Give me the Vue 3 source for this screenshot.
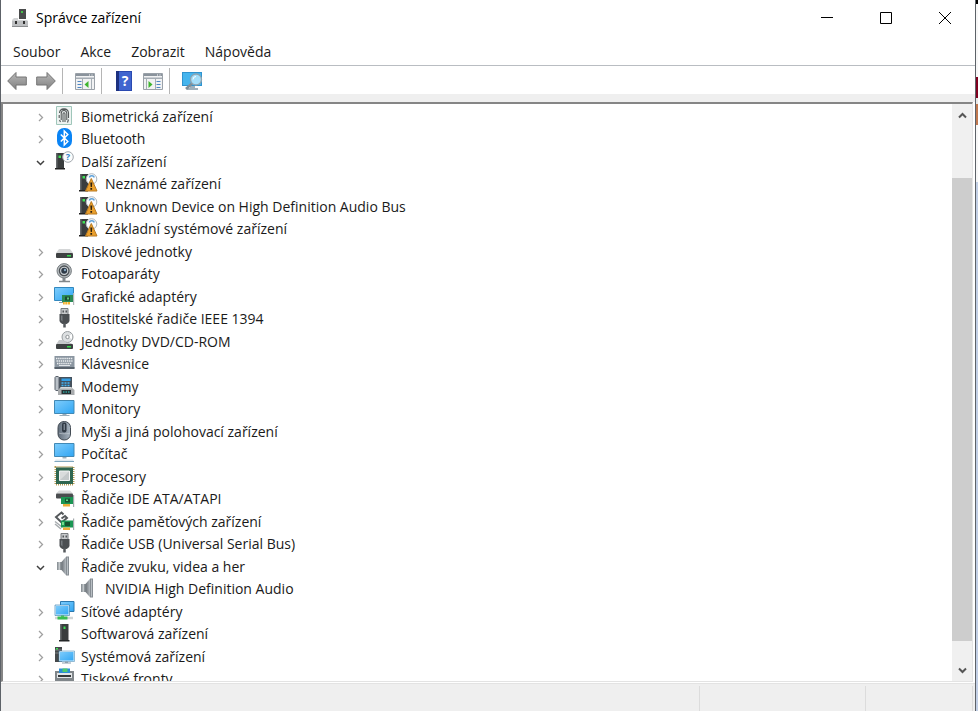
<script setup>
import { ref, computed } from "vue";

const menus = ["Soubor", "Akce", "Zobrazit", "Nápověda"];

const tree = ref([
  { label: "Biometrická zařízení", icon: "biometric" },
  { label: "Bluetooth", icon: "bluetooth" },
  {
    label: "Další zařízení",
    icon: "other",
    open: true,
    children: [
      { label: "Neznámé zařízení", icon: "unknown" },
      { label: "Unknown Device on High Definition Audio Bus", icon: "unknown" },
      { label: "Základní systémové zařízení", icon: "unknown" },
    ],
  },
  { label: "Diskové jednotky", icon: "disk" },
  { label: "Fotoaparáty", icon: "camera" },
  { label: "Grafické adaptéry", icon: "graphics" },
  { label: "Hostitelské řadiče IEEE 1394", icon: "plug" },
  { label: "Jednotky DVD/CD-ROM", icon: "dvd" },
  { label: "Klávesnice", icon: "keyboard" },
  { label: "Modemy", icon: "modem" },
  { label: "Monitory", icon: "monitor" },
  { label: "Myši a jiná polohovací zařízení", icon: "mouse" },
  { label: "Počítač", icon: "computer" },
  { label: "Procesory", icon: "cpu" },
  { label: "Řadiče IDE ATA/ATAPI", icon: "ide" },
  { label: "Řadiče paměťových zařízení", icon: "storage" },
  { label: "Řadiče USB (Universal Serial Bus)", icon: "plug" },
  {
    label: "Řadiče zvuku, videa a her",
    icon: "speaker",
    open: true,
    children: [{ label: "NVIDIA High Definition Audio", icon: "speaker" }],
  },
  { label: "Síťové adaptéry", icon: "network" },
  { label: "Softwarová zařízení", icon: "software" },
  { label: "Systémová zařízení", icon: "system" },
  { label: "Tiskové fronty", icon: "printer" },
]);

// flat list of what is visible right now
const rows = computed(() =>
  tree.value.flatMap((node) => [
    { node, child: false },
    ...(node.open && node.children ? node.children.map((c) => ({ node: c, child: true })) : []),
  ])
);

function toggle(node) {
  node.open = !node.open;
}
</script>

<template>
  <div class="desktop">
    <main class="window">
      <header class="titlebar">
        <svg class="titlebar__icon" viewBox="0 0 18 20">
          <rect x="8" y="1" width="7" height="10" fill="#4a4c4c" />
          <rect x="10" y="3" width="2" height="2" fill="#46c24a" />
          <path d="M3 10h4v2h9l1 1v6H1v-7z" fill="#d2d4d5" />
          <path d="M1 13h16v6H1z" fill="#bdbfc1" />
          <path d="M1 18h16v1H1z" fill="#8b8d8f" />
          <path d="M4 13h2v3H4zM12 13h2v3h-2z" fill="#303030" />
        </svg>
        <h1 class="titlebar__text">Správce zařízení</h1>
        <div class="titlebar__controls">
          <button class="control" aria-label="Minimalizovat">
            <svg viewBox="0 0 12 12"><path d="M0 5.500h12" /></svg>
          </button>
          <button class="control" aria-label="Maximalizovat">
            <svg viewBox="0 0 12 12"><path d="M.5 .5h11v11H.5z" /></svg>
          </button>
          <button class="control" aria-label="Zavřít">
            <svg viewBox="0 0 12 12"><path d="M0 0l12 12M12 0L0 12" /></svg>
          </button>
        </div>
      </header>

      <nav class="menu">
        <button v-for="m in menus" :key="m" class="menu__item">{{ m }}</button>
      </nav>

      <div class="toolbar">
        <div class="toolbar__group">
          <button class="tool" aria-label="Zpět">
            <svg viewBox="0 0 20 20">
              <path d="M.7 10L9 1.500V6h10.300v8H9v4.500z" fill="url(#gArrow)" stroke="#757575" />
            </svg>
          </button>
          <button class="tool" aria-label="Vpřed">
            <svg viewBox="0 0 20 20">
              <path d="M19.300 10L11 1.500V6H.7v8H11v4.500z" fill="url(#gArrow)" stroke="#757575" />
            </svg>
          </button>
        </div>
        <div class="toolbar__group">
          <button class="tool" aria-label="Zobrazit strom konzoly">
            <svg viewBox="0 0 20 20">
              <path d="M.5 2.500h19v16H.5z" fill="#f1f2f3" stroke="#9aa1a8" />
              <path d="M1 3h18v2H1z" fill="#8a939c" />
              <path d="M14 3.500h1v1h-1zM16.500 3.500h1v1h-1z" fill="#fff" />
              <path d="M1 6.500h18v1.500H1z" fill="#a5adb4" />
              <path d="M2.500 10.500h4M2.500 13.500h4M2.500 16.500h4" stroke="#4d86c4" />
              <path d="M7.500 8v10M16.500 8v10" stroke="#a5adb4" />
              <path d="M13.500 10v7L9.500 13.500z" fill="#3fb52f" />
            </svg>
          </button>
        </div>
        <div class="toolbar__group">
          <button class="tool" aria-label="Nápověda">
            <svg viewBox="0 0 20 20">
              <path d="M2 0h16v20H2z" fill="#2a49b0" />
              <path d="M5 1h12v18H5z" fill="#4065cf" />
              <path d="M2 0h3v20H2z" fill="#1d3180" />
              <text x="11" y="15" text-anchor="middle" font-size="14" font-weight="bold" fill="#fff">?</text>
            </svg>
          </button>
          <button class="tool" aria-label="Podokno akcí">
            <svg viewBox="0 0 20 20">
              <path d="M.5 2.500h19v16H.5z" fill="#f1f2f3" stroke="#9aa1a8" />
              <path d="M1 3h18v2H1z" fill="#8a939c" />
              <path d="M14 3.500h1v1h-1zM16.500 3.500h1v1h-1z" fill="#fff" />
              <path d="M1 6.500h18v1.500H1z" fill="#a5adb4" />
              <path d="M13.500 10.500h4M13.500 13.500h4M13.500 16.500h4" stroke="#4d86c4" />
              <path d="M3.500 8v10M12.500 8v10" stroke="#a5adb4" />
              <path d="M5.500 10v7l4-3.500z" fill="#3fb52f" />
            </svg>
          </button>
        </div>
        <div class="toolbar__group">
          <button class="tool" aria-label="Vyhledat změny hardwaru">
            <svg viewBox="0 0 20 20">
              <path d="M0 1h20v14H0z" fill="#2f93cf" />
              <path d="M1 2h18v12H1z" fill="#45b5ee" />
              <path d="M8 15h5v2h3v2H5v-2h3z" fill="#9fb0bb" />
              <path d="M10.500 12l-6.500 6" stroke="#7e8e99" stroke-width="2.500" />
              <circle cx="14" cy="8.500" r="5.500" fill="#a4def9" stroke="#8fa3af" stroke-width="1.300" />
              <path d="M11 8.500a3 3 0 0 1 3-3" fill="none" stroke="#fff" />
            </svg>
          </button>
        </div>
      </div>

      <section class="pane">
        <ul class="tree">
          <li v-for="row in rows" :key="row.node.label" :class="['row', { 'row--child': row.child }]">
            <button
              v-if="!row.child"
              :class="['row__toggle', { open: row.node.open }]"
              :aria-label="row.node.label"
              @click="toggle(row.node)"
            >
              <svg v-if="row.node.open" viewBox="0 0 9 9"><path d="M1 3l3.500 3.500L8 3" /></svg>
              <svg v-else viewBox="0 0 9 9"><path d="M3 1l3.500 3.500L3 8" /></svg>
            </button>
            <svg class="row__icon" viewBox="0 0 21 20"><use :href="'#' + row.node.icon" /></svg>
            <span class="row__label">{{ row.node.label }}</span>
          </li>
        </ul>
        <div class="scrollbar">
          <button class="scrollbar__arrow" aria-label="Nahoru">
            <svg viewBox="0 0 9 9"><path d="M1 6.500L4.500 3 8 6.500" /></svg>
          </button>
          <div class="scrollbar__track"><div class="scrollbar__thumb"></div></div>
          <button class="scrollbar__arrow" aria-label="Dolů">
            <svg viewBox="0 0 9 9"><path d="M1 2.500L4.500 6 8 2.500" /></svg>
          </button>
        </div>
      </section>

      <footer class="status">
        <div class="status__cell status__cell--main"></div>
        <div class="status__cell"></div>
        <div class="status__cell status__cell--last"></div>
      </footer>
    </main>
    <div class="behind"></div>

    <!-- Icon sprite -->
    <svg class="sprite" aria-hidden="true">
      <defs>
        <linearGradient id="gArrow" x2="0" y2="1">
          <stop offset="0" stop-color="#b9b9b9" />
          <stop offset="1" stop-color="#808080" />
        </linearGradient>
        <linearGradient id="gScreen" x2="1" y2="1">
          <stop offset="0" stop-color="#7fcdfc" />
          <stop offset="1" stop-color="#2fa5f3" />
        </linearGradient>
        <linearGradient id="gCone">
          <stop offset="0" stop-color="#6a7076" />
          <stop offset="1" stop-color="#b4babf" />
        </linearGradient>
        <linearGradient id="gMouse">
          <stop offset="0" stop-color="#5f6b78" />
          <stop offset="1" stop-color="#a9b5c1" />
        </linearGradient>
      </defs>

      <symbol id="biometric" viewBox="0 0 21 20">
        <path d="M2.500 .5h15v18h-15z" fill="#edf3f1" stroke="#9fc6ba" />
        <g fill="none" stroke="#55595a" stroke-width="1.100">
          <path d="M5.500 7C6 1.500 14 1.500 14.500 7v5" />
          <path d="M5.200 9v3M7.200 14V7.500c0-4 5.600-4 5.600 0V14" />
          <path d="M9 16V8c0-1.700 2-1.700 2 0v8M5.500 14l1 2M14.500 13.500l-1 3" />
          <path d="M7 3.500h6" />
        </g>
      </symbol>

      <symbol id="bluetooth" viewBox="0 0 21 20">
        <rect x="3" y="0" width="15" height="20" rx="7" fill="#0a84f5" />
        <path d="M6.800 6.500l7 7-3.500 3.500V3l3.500 3.500-7 7" fill="none" stroke="#fff" stroke-width="1.500" />
      </symbol>

      <symbol id="other" viewBox="0 0 21 20">
        <path d="M2 2h8v15H2z" fill="#3a3d3e" />
        <path d="M2 2h1.500v15H2z" fill="#65696b" />
        <path d="M1 17h10v1.500H1z" fill="#222" />
        <path d="M4.500 4.500h2.500v2.500H4.500z" fill="#3ee055" />
        <circle cx="14" cy="6" r="5.300" fill="#fbfcfd" stroke="#a3a9ae" />
        <text x="14" y="9" text-anchor="middle" font-size="9" font-weight="bold" fill="#2e81c9">?</text>
      </symbol>

      <symbol id="unknown" viewBox="0 0 21 20">
        <path d="M2 1h8v16H2z" fill="#3a3d3e" />
        <path d="M2 1h1.500v16H2z" fill="#65696b" />
        <path d="M1 17h9v1.500H1z" fill="#222" />
        <path d="M4.500 3h2.500v2.500H4.500z" fill="#3ee055" />
        <circle cx="13.500" cy="6" r="5.300" fill="#fbfcfd" stroke="#aeb6bd" />
        <path d="M11.500 4.500c0-2.500 4.500-2.500 4.500 0" fill="none" stroke="#5a9fd8" stroke-width="1.500" />
        <path d="M13.300 5.500L19 18H7.500z" fill="#eba02c" stroke="#b87a22" stroke-linejoin="round" />
        <path d="M12.300 9.500h2l-.4 4.500h-1.200zM12.400 15h1.700v1.700h-1.700z" fill="#2b2110" />
      </symbol>

      <symbol id="disk" viewBox="0 0 21 20">
        <path d="M5 8h11l3 4H2z" fill="#d4d6d7" />
        <rect x="2" y="12" width="17" height="5" rx="1" fill="#3e4142" />
        <path d="M13 14h4v1.500h-4z" fill="#35d84b" />
      </symbol>

      <symbol id="camera" viewBox="0 0 21 20">
        <path d="M10 13v5" stroke="#858a8e" stroke-width="3" />
        <path d="M5 18.500h11" stroke="#82878a" stroke-width="1.500" />
        <circle cx="10.200" cy="7.800" r="7.200" fill="#b5babd" stroke="#777d81" />
        <circle cx="10.200" cy="7.800" r="4.800" fill="#cfd3d6" stroke="#4b5054" stroke-width="1.300" />
        <circle cx="10.200" cy="7.800" r="3" fill="#2e3a47" />
        <circle cx="11" cy="7" r="1.200" fill="#85a4bd" />
      </symbol>

      <symbol id="graphics" viewBox="0 0 21 20">
        <path d="M.5 1.500h19v13H.5z" fill="url(#gScreen)" stroke="#3288bf" />
        <path d="M5 16h6v1H5z" fill="#8aa0ad" />
        <path d="M8 9h11v7H8z" fill="#2a8a55" />
        <path d="M11 10.500h5v4h-5z" fill="#1c4a33" />
        <path d="M13 11.500h2v2h-2z" fill="#5dc87b" />
        <path d="M19 7h1.200v12H19z" fill="#b3b7b9" />
        <path d="M9 16h7v2.500H9z" fill="#f4b12d" />
        <path d="M11 16v3M13.500 16v3" stroke="#fff" stroke-width=".5" />
      </symbol>

      <symbol id="plug" viewBox="0 0 21 20">
        <path d="M7 .5h7v6H7z" fill="#c6c9cb" stroke="#777b7e" />
        <path d="M8.500 2.500h1.500v2H8.500zM11.500 2.500H13v2h-1.500z" fill="#53575a" />
        <path d="M5.500 6h10v6.500c0 2-2 3-3 3.500h-4c-1-.5-3-1.500-3-3.500z" fill="#4b4f52" />
        <path d="M7 7.500h1.500v6L7 12z" fill="#777c80" />
        <path d="M10.500 15v4.500" stroke="#55595c" stroke-width="2.500" />
      </symbol>

      <symbol id="dvd" viewBox="0 0 21 20">
        <circle cx="13.500" cy="6" r="5.500" fill="#dcdfe1" stroke="#989da0" />
        <path d="M13.500 6l4.500-3v5z" fill="#fff" />
        <circle cx="13.500" cy="6" r="1.700" fill="#fff" stroke="#8c9194" />
        <path d="M5 9h4l4 3h4l2 1.500H2z" fill="#c6c9cb" />
        <rect x="2" y="13" width="17" height="5" rx="1" fill="#3e4142" />
        <path d="M13 15h4v1.500h-4z" fill="#35d84b" />
      </symbol>

      <symbol id="keyboard" viewBox="0 0 21 20">
        <path d="M.5 3h20v12.500H.5z" fill="#8b96a1" />
        <path d="M.5 14h20v2H.5z" fill="#59636d" />
        <path d="M2 5.500h17M2.500 8h16M3 10.500h15" stroke="#eceff1" stroke-width="1.400" stroke-dasharray="1.400 .7" />
        <path d="M5 12.500h11" stroke="#e0e4e8" />
      </symbol>

      <symbol id="modem" viewBox="0 0 21 20">
        <path d="M5 1h13v12H5z" fill="#45515d" />
        <path d="M1 1.500C1 0 5 0 5 1.500v12C5 15 1 15 1 13.500z" fill="#b9c0c7" stroke="#58606a" />
        <path d="M7.500 2.500h9v2.500h-9z" fill="#35a0e6" />
        <path d="M7.500 7h9M7.500 9.500h9" stroke="#45b4f3" stroke-width="1.400" stroke-dasharray="2 1" />
        <path d="M7 11h10l3.500 3v5H4v-5z" fill="#a9acae" />
        <path d="M7 11h10l1.500 1.500h-13z" fill="#d9dbdc" />
        <path d="M7.500 14h9.500v4H7.500z" fill="#293033" />
        <path d="M9 16h7" stroke="#32d7ce" stroke-dasharray="1.500 1" />
      </symbol>

      <symbol id="monitor" viewBox="0 0 21 20">
        <path d="M.5 2.500h19.500v13H.5z" fill="url(#gScreen)" stroke="#4189b5" />
        <path d="M8.500 16h4v1h3v1h-10v-1h3z" fill="#9badb9" />
      </symbol>

      <symbol id="mouse" viewBox="0 0 21 20">
        <rect x="4" y=".5" width="12.500" height="18.500" rx="6" fill="url(#gMouse)" stroke="#434b54" />
        <rect x="8" y="1.500" width="4.500" height="10" rx="2" fill="#323b46" />
        <path d="M10.200 3v6" stroke="#9aa6b1" />
        <path d="M5 12c1 1 10 1 11 0" fill="none" stroke="#c9d1d8" stroke-width=".6" />
      </symbol>

      <symbol id="computer" viewBox="0 0 21 20">
        <path d="M.5 .5h19.500v13H.5z" fill="url(#gScreen)" stroke="#4189b5" />
        <path d="M8.500 14h4v1.500h-4z" fill="#9badb9" />
        <path d="M1.500 16.500h17.500l1 2.500H.5z" fill="#dfe9f0" />
        <path d="M.5 18h19.500v1H.5z" fill="#7fa7bf" />
      </symbol>

      <symbol id="cpu" viewBox="0 0 21 20">
        <path d="M1.500 1h18v17.500h-18z" fill="none" stroke="#b39a55" stroke-width="2" stroke-dasharray="1 1" />
        <path d="M2 1.500h17v16.500H2z" fill="#2f6650" />
        <path d="M5.500 5h10v9.500h-10z" fill="#d9dcdc" stroke="#f4f5f5" />
        <path d="M6 14l9-8.500V14z" fill="#c4c9ca" />
      </symbol>

      <symbol id="ide" viewBox="0 0 21 20">
        <path d="M5 2.500h11l3 3H2z" fill="#d8dadb" />
        <rect x="2" y="5.500" width="17" height="5" rx="1" fill="#4a4d4f" />
        <path d="M7 9h12v7H7z" fill="#1b9654" />
        <path d="M11 10.500h5v4h-5z" fill="#14532f" />
        <path d="M12 11.500h2V13h-2z" fill="#63d984" />
        <path d="M19 7h1.200v12H19z" fill="#a4aaad" />
        <path d="M9 16h7v2.500H9z" fill="#e9ad38" />
      </symbol>

      <symbol id="storage" viewBox="0 0 21 20">
        <path d="M9.500 3.500L7.500 1.500 2 6l5.500 5.500L13 7l-2-2-3.500 2.500" fill="none" stroke="#54585b" stroke-width="2" />
        <path d="M1 10.500l7 5.500M1 13l6 5" stroke="#a7acaf" stroke-width="1.500" />
        <path d="M7 9.500h12v7H7z" fill="#1b9654" />
        <path d="M11 11h5v4h-5z" fill="#14532f" />
        <path d="M8 11h2v3H8z" fill="#72db8d" />
        <path d="M19 7.500h1.200V19H19z" fill="#a4aaad" />
        <path d="M9 16.500h7V19H9z" fill="#e9ad38" />
      </symbol>

      <symbol id="speaker" viewBox="0 0 21 20">
        <path d="M3 6h5v8H3z" fill="#8d9499" />
        <path d="M4.500 6H6v8H4.500z" fill="#c3c8cb" />
        <path d="M7.500 6L12 .8v18.400L7.500 14z" fill="url(#gCone)" />
        <path d="M12 .5h3v19h-3z" fill="#868d93" />
        <path d="M13 1.500h1v17h-1z" fill="#b9bfc4" />
      </symbol>

      <symbol id="network" viewBox="0 0 21 20">
        <path d="M6.500 .5h13.500v10H6.500z" fill="url(#gScreen)" stroke="#2b78ae" />
        <path d="M1.500 4.500h13.500v9.500H1.500z" fill="url(#gScreen)" stroke="#e2f3fd" />
        <path d="M1 4h14.500v10.500H1z" fill="none" stroke="#2877ad" stroke-width=".6" />
        <path d="M7 14.500h3V17H7z" fill="#3ab653" />
        <path d="M1 17h18" stroke="#d0d5d6" stroke-width="2.500" />
        <path d="M3.500 17h10" stroke="#38bd52" stroke-width="3" />
      </symbol>

      <symbol id="software" viewBox="0 0 21 20">
        <path d="M6 1h8.500v16H6z" fill="#3a3d3e" />
        <path d="M6 1h1.500v16H6z" fill="#686c6e" />
        <path d="M5 17h10.500v1.500H5z" fill="#232526" />
        <path d="M9.500 3.500h2V6h-2z" fill="#3ee055" />
      </symbol>

      <symbol id="system" viewBox="0 0 21 20">
        <path d="M1 1h7v15H1z" fill="#45494b" />
        <path d="M1 4h7M1 7h7" stroke="#888d90" stroke-width=".8" />
        <path d="M2 2h2v1.500H2z" fill="#3ee055" />
        <path d="M5.500 5.500h14.500V15H5.500z" fill="url(#gScreen)" stroke="#d9effb" />
        <path d="M5 5h15.500v10.500H5z" fill="none" stroke="#387fac" stroke-width=".5" />
        <path d="M11 15.500h3v1h3v1H8v-1h3z" fill="#8ba0ae" />
      </symbol>

      <symbol id="printer" viewBox="0 0 21 20">
        <path d="M1 3h19v12H1z" fill="#80868a" />
        <path d="M5 .5h11v5H5z" fill="#2c8ed6" />
        <path d="M8.500 .5h5V4h-5z" fill="#4fcb6f" />
        <path d="M3 5h15v5H3z" fill="#e3e6e8" />
        <path d="M4 7h13v2H4z" fill="#34383a" />
      </symbol>
    </svg>
  </div>
</template>

<style>
body {
  margin: 0;
}
</style>

<style scoped>
.desktop {
  display: flex;
  height: 100vh;
  overflow: hidden;
  font-family: "Open Sans", "Noto Sans", sans-serif;
  font-size: 14px;
  color: #1a1a1a;
}

.window {
  flex: 1;
  min-width: 0;
  display: flex;
  flex-direction: column;
  box-sizing: border-box;
  background: #fff;
  border-left: 1px solid #5d6268;
  border-right: 1px solid #5d6268;
}

/* sliver of the window underneath */
.behind {
  width: 2px;
  background: linear-gradient(
    #000 4px,
    #f7f7f7 4px 77px,
    #80001f 77px 98px,
    #e8e8e8 98px 104px,
    #c07850 104px 125px,
    #f7f7f7 125px 182px,
    #c3d0e6 182px
  );
}

button {
  padding: 0;
  border: none;
  background: none;
  font: inherit;
  color: inherit;
}

.sprite {
  position: absolute;
  width: 0;
  height: 0;
}

/* Title bar */
.titlebar {
  display: flex;
  align-items: center;
  height: 36px;
  padding: 0 1px 0 10px;
  flex-shrink: 0;
}

.titlebar__icon {
  width: 18px;
  height: 20px;
}

.titlebar__text {
  margin: 0 auto 0 7px;
  padding-bottom: 2px;
  font-size: 14px;
  font-weight: 400;
  color: #000;
}

.titlebar__controls {
  display: flex;
  height: 100%;
}

.control {
  display: grid;
  place-items: center;
  width: 59px;
}

.control svg {
  width: 12px;
  height: 12px;
  fill: none;
  stroke: #000;
}

/* Menu */
.menu {
  display: flex;
  gap: 20px;
  height: 27px;
  padding: 2px 0 0 12px;
  flex-shrink: 0;
  border-bottom: 1px solid #b9bdc2;
}

/* Toolbar */
.toolbar {
  display: flex;
  align-items: flex-end;
  height: 28px;
  flex-shrink: 0;
  border-bottom: 8px solid #efefef;
}

.toolbar__group {
  display: flex;
  align-items: center;
  gap: 9px;
  height: 26px;
  padding: 0 6px;
}

.toolbar__group + .toolbar__group {
  padding-left: 12px;
  border-left: 1px solid #b5b5b5;
}

.tool,
.tool svg {
  display: block;
  width: 20px;
  height: 20px;
}

.tool svg,
.row__icon {
  overflow: visible;
}

/* Tree */
.pane {
  flex: 1;
  min-height: 0;
  display: flex;
  margin-right: 2px;
  border: 1px solid #e3e3e3;
  border-top: 2px solid #858585;
  border-left: 2px solid #858585;
}

.tree {
  flex: 1;
  margin: 0;
  padding: 2px 0 0 32px;
  overflow: hidden;
  list-style: none;
}

.row {
  display: flex;
  align-items: flex-start;
  height: 22px;
}

.row:nth-child(even) {
  height: 23px;
}

.row--child {
  padding-left: 43px;
}

.row__toggle {
  display: grid;
  place-items: center;
  width: 11px;
  height: 22px;
  margin-right: 8px;
}

.row__toggle svg,
.scrollbar__arrow svg {
  width: 9px;
  height: 9px;
  fill: none;
  stroke: #a0a0a0;
  stroke-width: 1.300;
}

.row__toggle.open svg {
  stroke: #404040;
  stroke-width: 1.500;
}

.row__icon {
  width: 21px;
  height: 20px;
  flex-shrink: 0;
}

.row__label {
  margin-left: 6px;
  line-height: 22px;
  white-space: nowrap;
}

/* Scrollbar */
.scrollbar {
  display: flex;
  flex-direction: column;
  width: 20px;
  background: #f0f0f0;
}

.scrollbar__arrow {
  display: grid;
  place-items: center;
  height: 22px;
}

.scrollbar__arrow svg {
  stroke: #555;
  stroke-width: 2;
}

.scrollbar__track {
  flex: 1;
  display: flex;
  flex-direction: column;
  justify-content: flex-end;
  padding-bottom: 18px;
}

.scrollbar__thumb {
  height: 90%;
  background: #cdcdcd;
}

/* Status bar */
.status {
  display: flex;
  height: 25px;
  margin-top: 1px;
  padding-top: 2px;
  flex-shrink: 0;
  background: #efefef;
  border-top: 1px solid #e3e3e3;
}

.status__cell {
  width: 165px;
  border-right: 1px solid #dcdcdc;
}

.status__cell--main {
  flex: 1;
}

.status__cell--last {
  width: 106px;
  margin-right: 2px;
}
</style>
